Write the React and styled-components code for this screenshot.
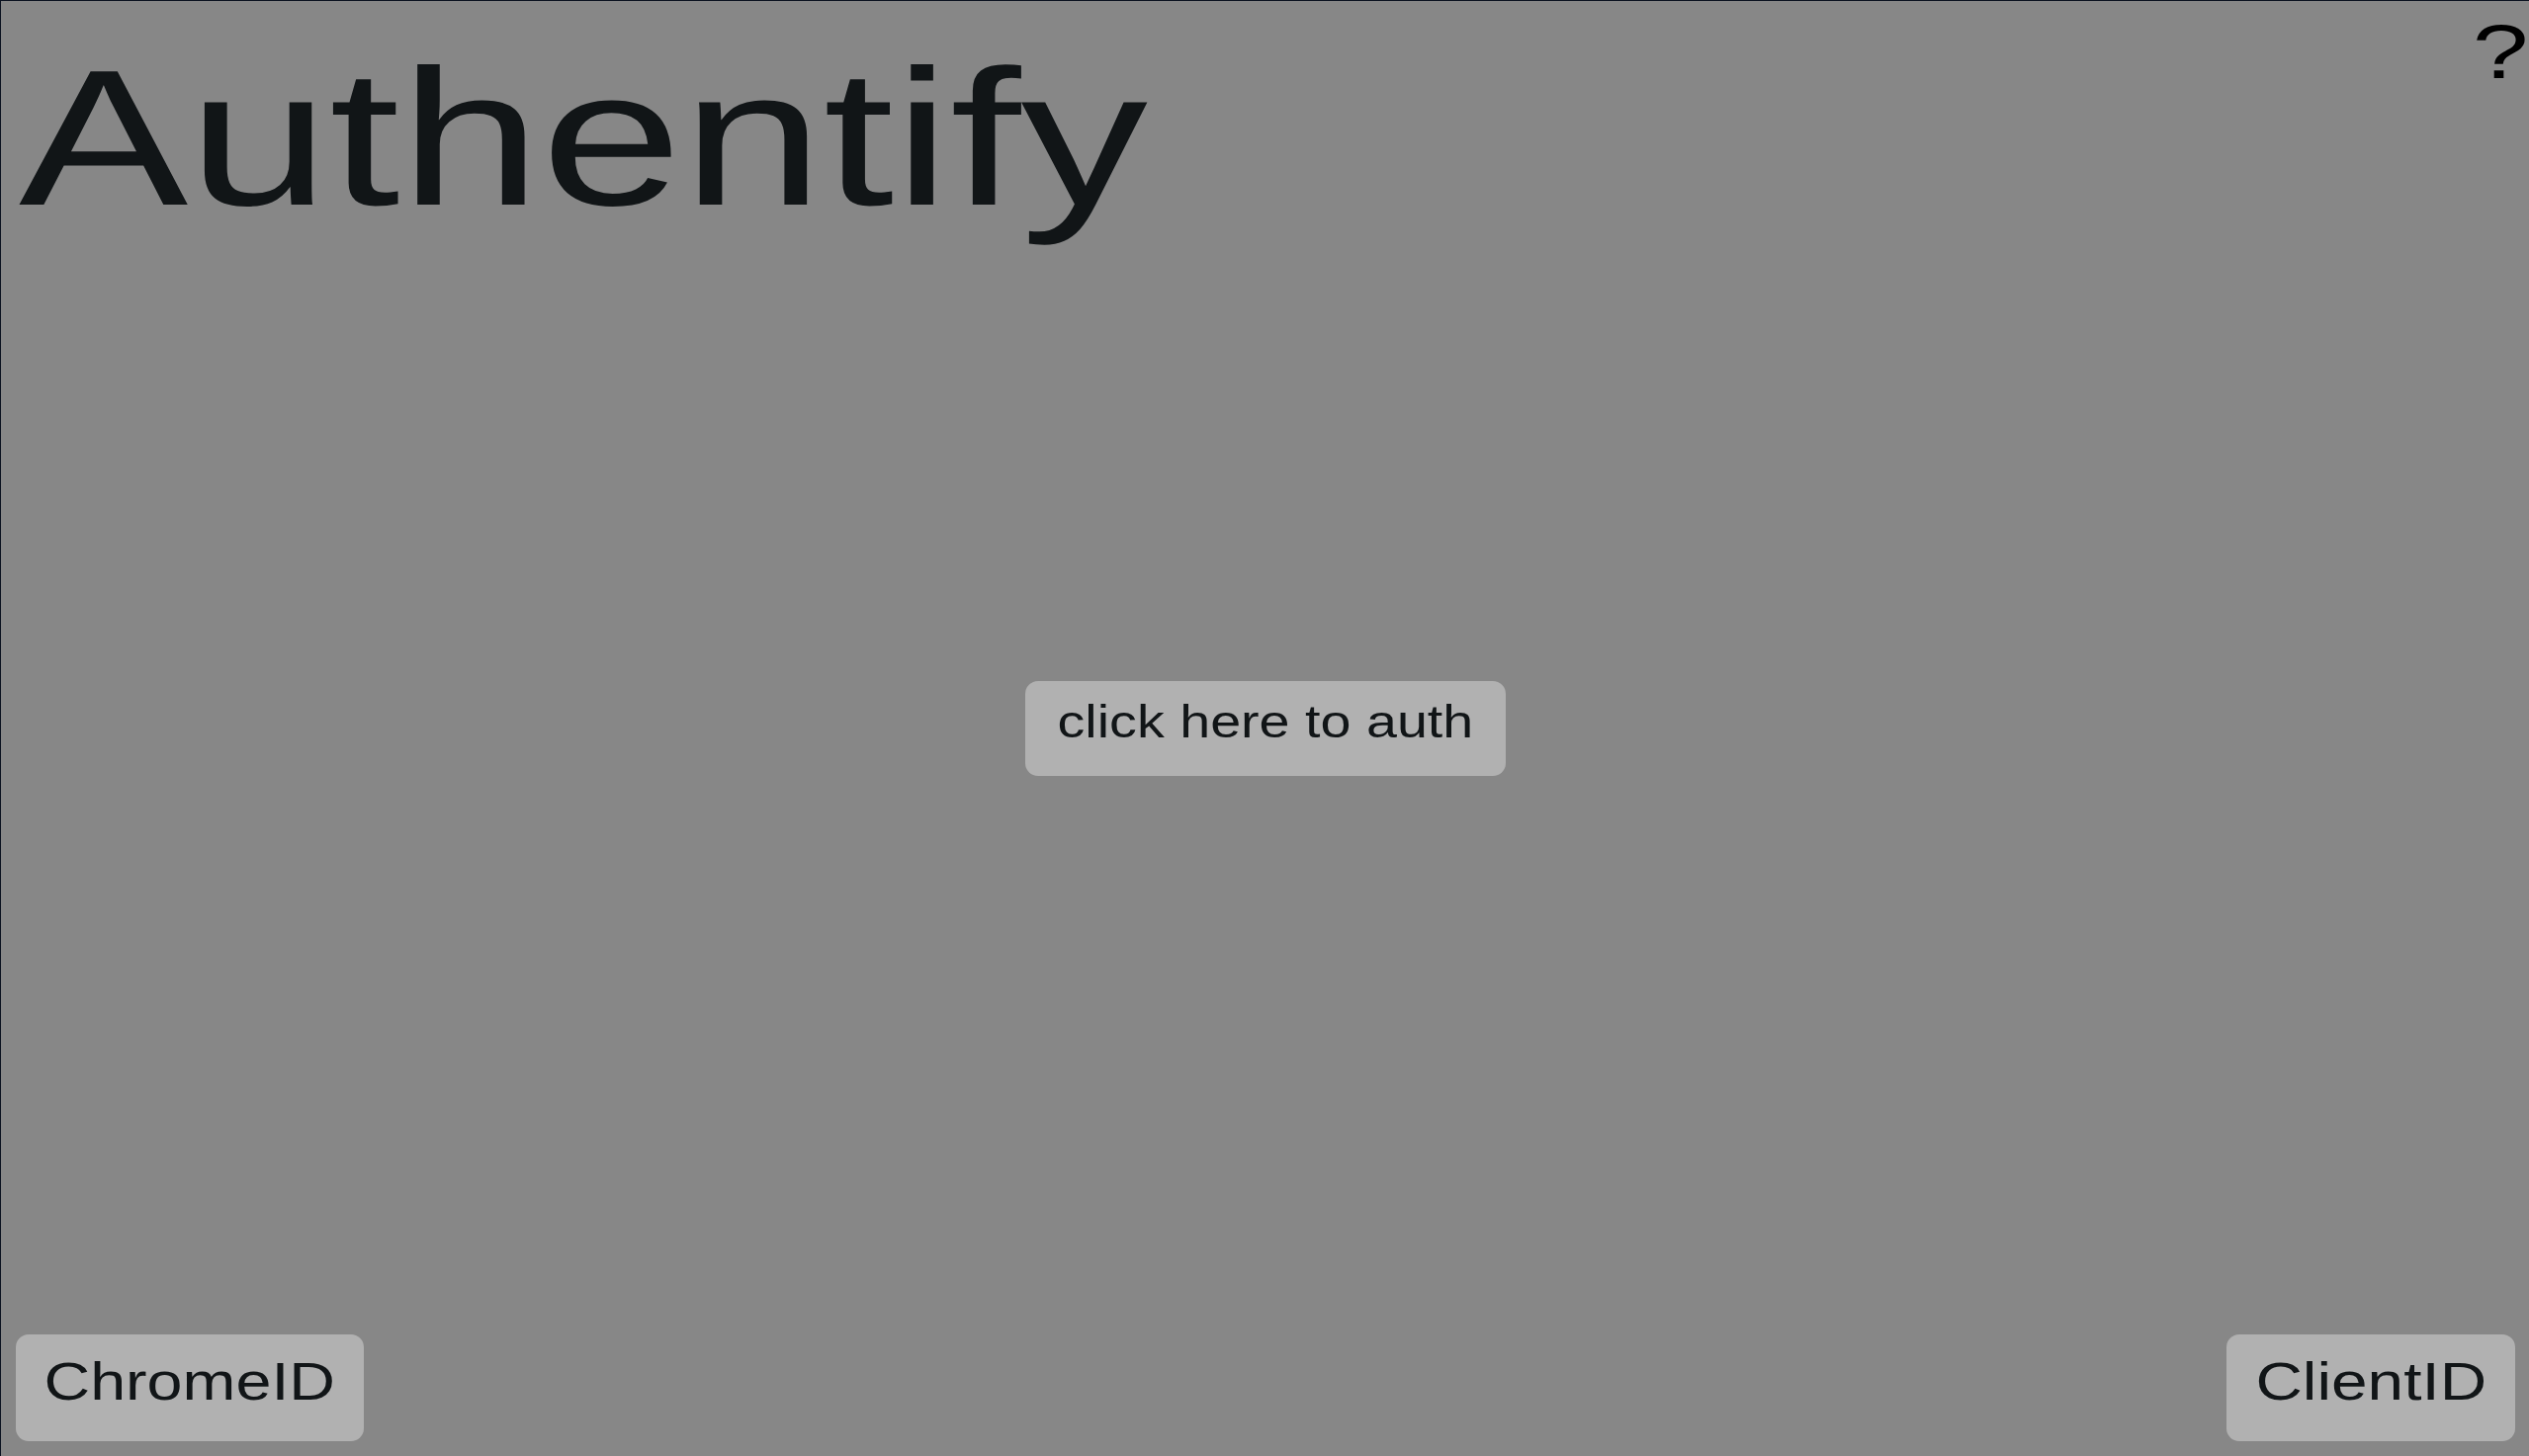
import styled, { createGlobalStyle } from "styled-components";

const GlobalStyle = createGlobalStyle`
  html, body {
    margin: 0;
    padding: 0;
    background: #878787;
  }
  body {
    font-family: "Liberation Sans", Arial, sans-serif;
    color: #111517;
  }
`;

const Screen = styled.div`
  width: 100vw;
  height: 100vh;
  box-sizing: border-box;
  border-top: 1px solid #0b1220;
  border-left: 1px solid #0b1220;
  background: #878787;
  display: grid;
  grid-template-rows: 1fr auto 1fr;
  overflow: hidden;
`;

const Header = styled.header`
  align-self: start;
  display: flex;
  justify-content: space-between;
  align-items: flex-start;
  padding: 41px 0 0 18px;
`;

const Title = styled.h1`
  margin: 0;
  font-size: 196px;
  font-weight: 400;
  line-height: 1;
  color: #111517;
  transform: scaleX(1.31);
  transform-origin: left center;
`;

const Help = styled.span`
  margin: -29px 1px 0 0;
  font-size: 78px;
  line-height: 1;
  color: #000;
  cursor: pointer;
  transform: scaleX(1.3);
  transform-origin: right center;
`;

const Center = styled.main`
  display: flex;
  justify-content: center;
  align-items: center;
`;

const Footer = styled.footer`
  align-self: end;
  display: flex;
  justify-content: space-between;
  align-items: flex-end;
  padding: 0 14px 15px 15px;
`;

const Pill = styled.button`
  box-sizing: border-box;
  width: ${(p) => p.$w}px;
  height: ${(p) => p.$h}px;
  padding: 0 0 ${(p) => p.$lift}px;
  border: none;
  border-radius: 13px;
  background: #b1b1b1;
  color: #111517;
  font-family: "Liberation Sans", Arial, sans-serif;
  font-size: ${(p) => p.$size}px;
  line-height: 1;
  display: flex;
  justify-content: center;
  align-items: center;
  cursor: pointer;
`;

const Wide = styled.span`
  display: inline-block;
  white-space: nowrap;
  transform: scaleX(${(p) => p.$sx});
  transform-origin: center;
`;

export default function App() {
  return (
    <>
      <GlobalStyle />
      <Screen>
        <Header>
          <Title>Authentify</Title>
          <Help>?</Help>
        </Header>
        <Center>
          <Pill $w={486} $h={96} $size={46} $lift={14}>
            <Wide $sx={1.21}>click here to auth</Wide>
          </Pill>
        </Center>
        <Footer>
          <Pill $w={352} $h={108} $size={53} $lift={13}>
            <Wide $sx={1.22}>ChromeID</Wide>
          </Pill>
          <Pill $w={292} $h={108} $size={53} $lift={13}>
            <Wide $sx={1.24}>ClientID</Wide>
          </Pill>
        </Footer>
      </Screen>
    </>
  );
}
